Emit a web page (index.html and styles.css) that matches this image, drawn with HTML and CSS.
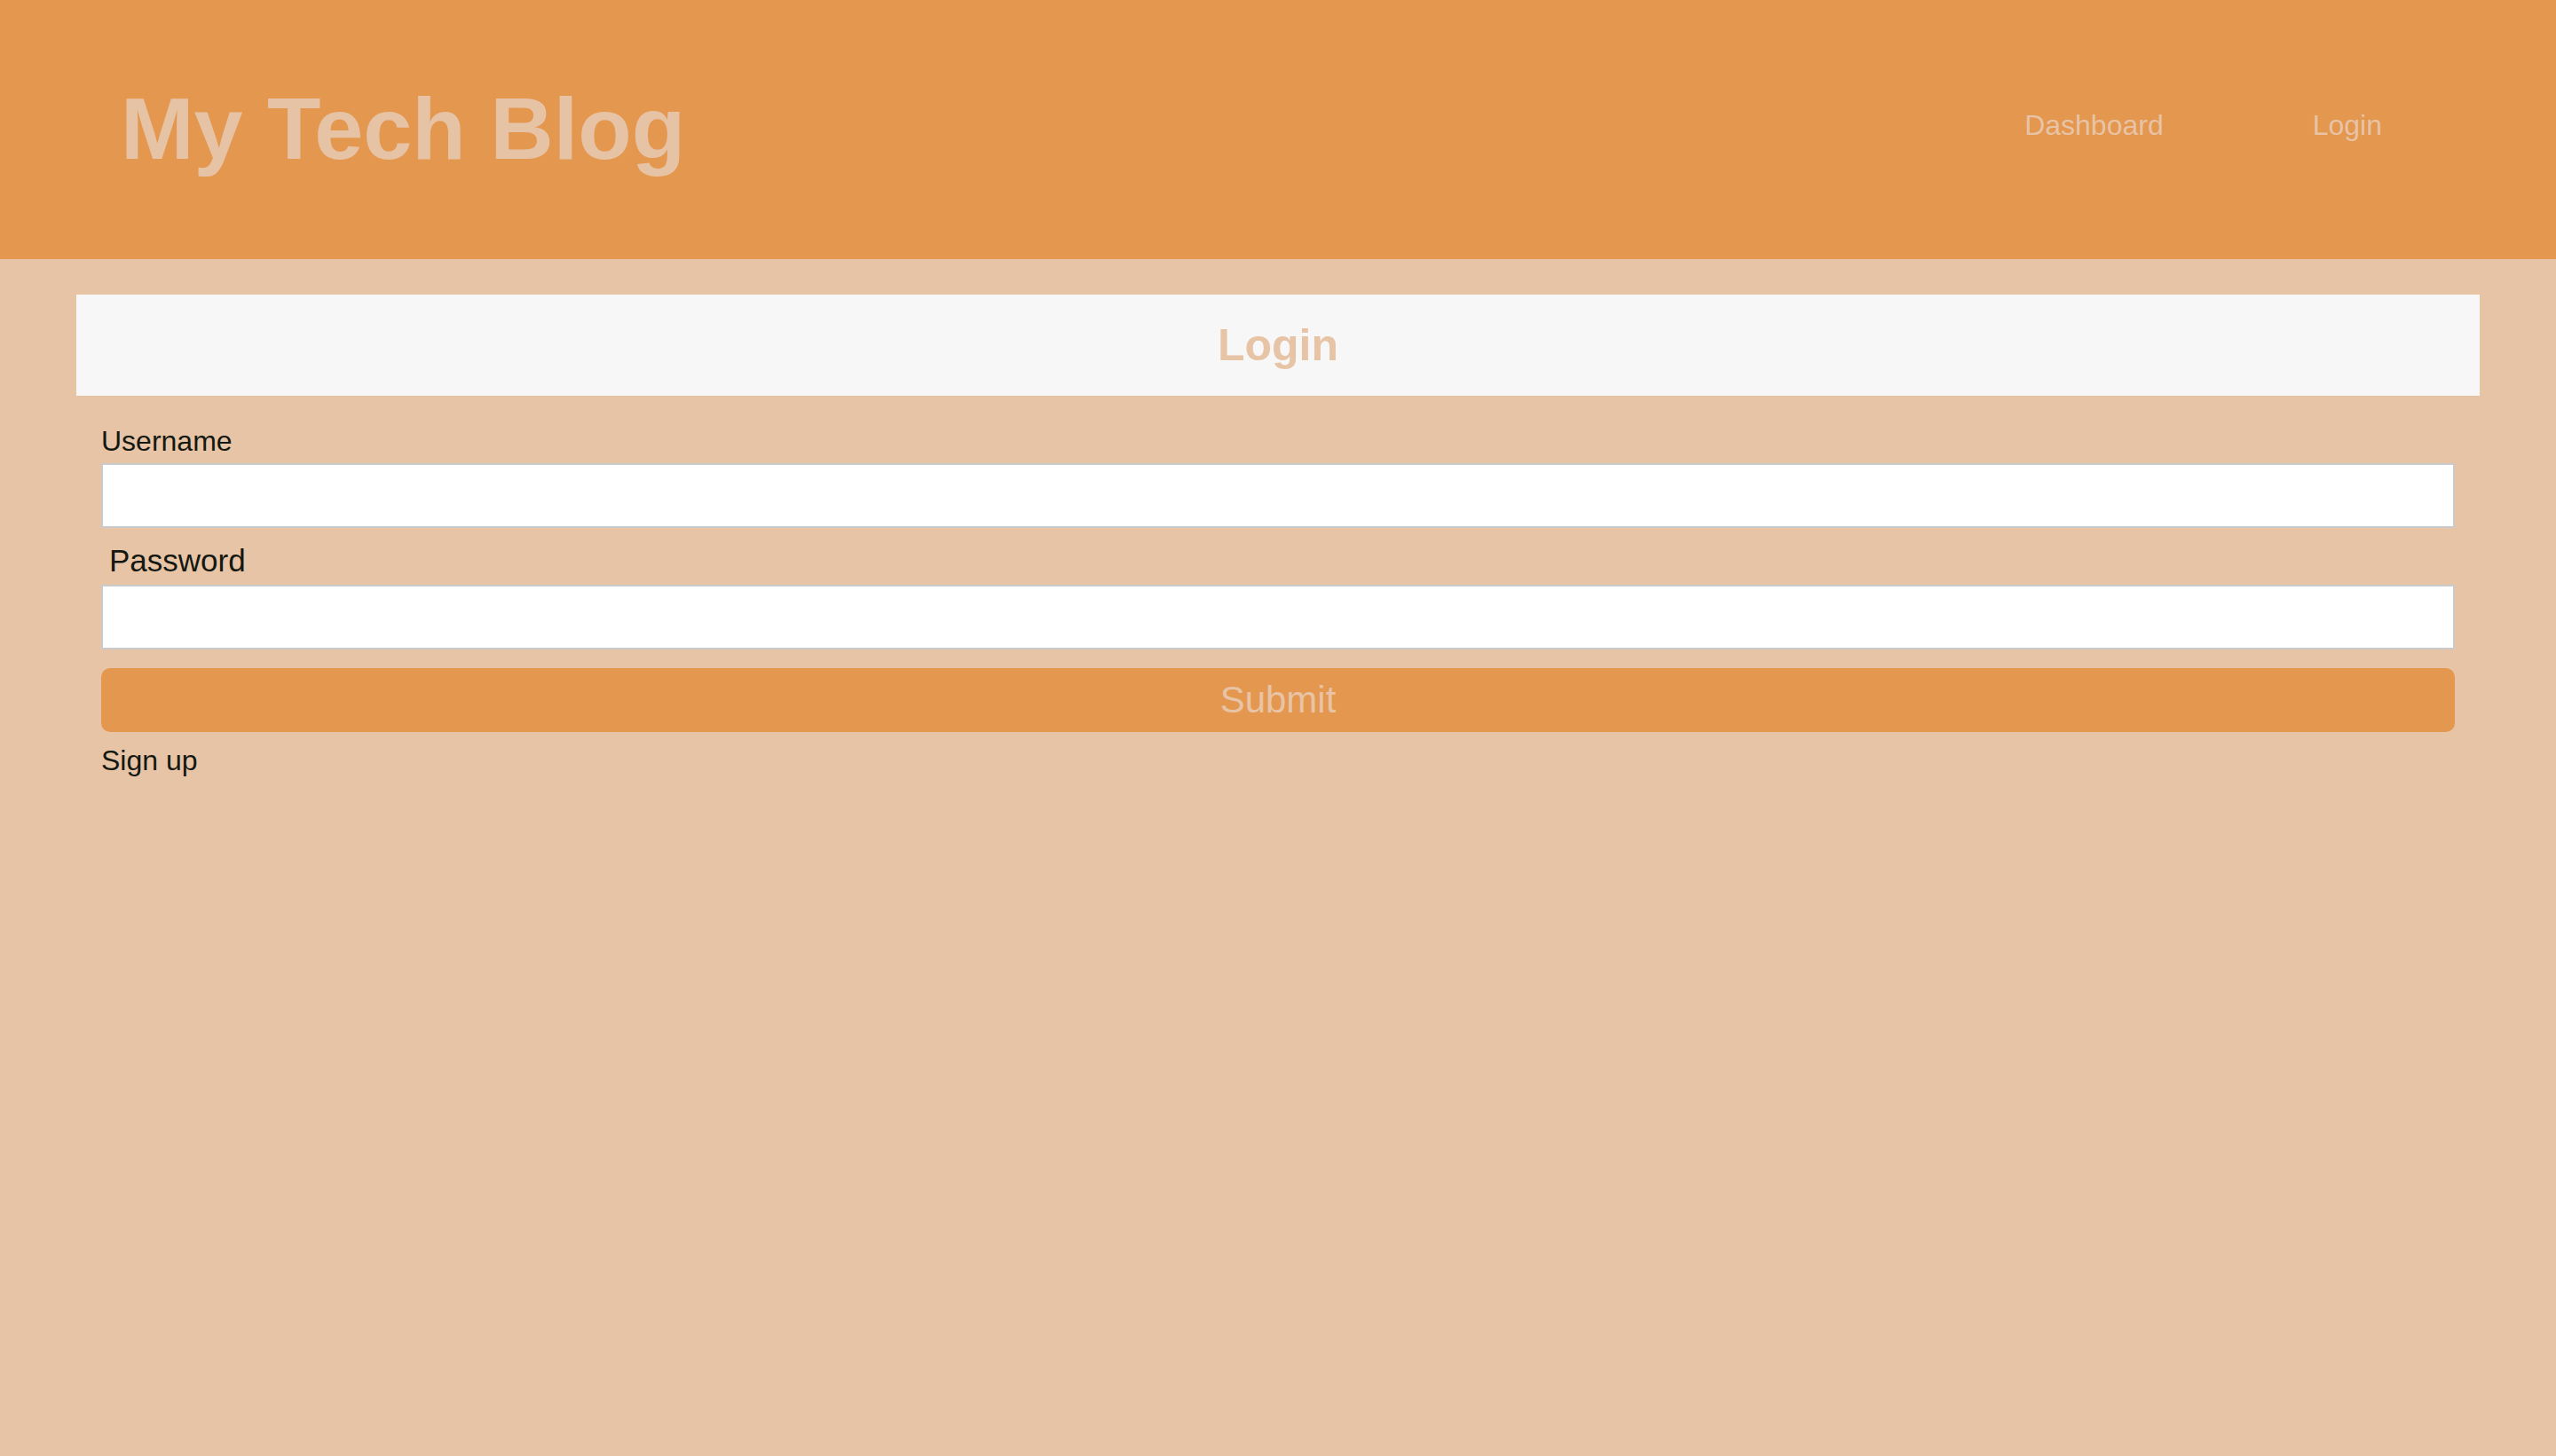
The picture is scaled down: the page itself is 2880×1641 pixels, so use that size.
FILE: index.html
```html
<!DOCTYPE html>
<html lang="en">
<head>
<meta charset="utf-8">
<title>My Tech Blog</title>
<link rel="stylesheet" href="styles.css">
</head>
<body>
<header class="site-header">
  <h1 class="site-title">My Tech Blog</h1>
  <nav class="site-nav">
    <a class="nav-link" href="#">Dashboard</a>
    <a class="nav-link" href="#">Login</a>
  </nav>
</header>
<main class="main">
  <div class="card-title">
    <h2 class="card-heading">Login</h2>
  </div>
  <form class="login-form">
    <label class="field-label" for="username">Username</label>
    <input class="text-input" id="username" type="text">
    <label class="field-label field-label--password" for="password">Password</label>
    <input class="text-input" id="password" type="password">
    <button class="submit-btn" type="button">Submit</button>
    <a class="signup-link" href="#">Sign up</a>
  </form>
</main>
</body>
</html>
```

FILE: styles.css
```css
html, body {
  margin: 0;
  padding: 0;
}

body {
  background: #e7c4a6;
  font-family: "Liberation Sans", Arial, Helvetica, sans-serif;
  min-height: 1641px;
}

.site-header {
  height: 292px;
  box-sizing: border-box;
  background: #e4974f;
  display: flex;
  align-items: flex-start;
  justify-content: space-between;
  padding: 0 196px 0 136px;
}

.site-title {
  margin: 95px 0 0;
  font-size: 99px;
  line-height: 1;
  font-weight: 700;
  color: #e7c3a6;
}

.site-nav {
  margin-top: 125px;
  display: flex;
  gap: 168px;
}

.nav-link {
  font-size: 32px;
  line-height: 1;
  color: #e8c3a5;
  text-decoration: none;
}

.main {
  padding: 40px 86px 0;
}

.card-title {
  height: 114px;
  background: #f7f7f7;
  display: flex;
  align-items: center;
  justify-content: center;
}

.card-heading {
  margin: 0;
  font-size: 50px;
  line-height: 1;
  font-weight: 700;
  color: #e8c4a6;
}

.login-form {
  display: flex;
  flex-direction: column;
  align-items: flex-start;
  padding: 0 28px;
}

.field-label {
  font-size: 32px;
  line-height: 1;
  color: #141810;
  margin-top: 35px;
  margin-bottom: 9px;
}

.field-label--password {
  font-size: 35px;
  margin-top: 19px;
  margin-bottom: 10px;
  padding-left: 9px;
}

.text-input {
  align-self: stretch;
  height: 73px;
  box-sizing: border-box;
  margin: 0;
  border: 2px solid #c8cacc;
  background: #ffffff;
  padding: 0 12px;
  font-size: 30px;
  font-family: inherit;
  outline: none;
}

.submit-btn {
  align-self: stretch;
  margin-top: 21px;
  height: 72px;
  border: none;
  border-radius: 10px;
  background: #e4974f;
  color: #e8c3a5;
  font-family: inherit;
  font-size: 42px;
  line-height: 1;
  padding: 0;
  cursor: pointer;
}

.signup-link {
  margin-top: 16px;
  font-size: 32px;
  line-height: 1;
  color: #141810;
  text-decoration: none;
}
```
